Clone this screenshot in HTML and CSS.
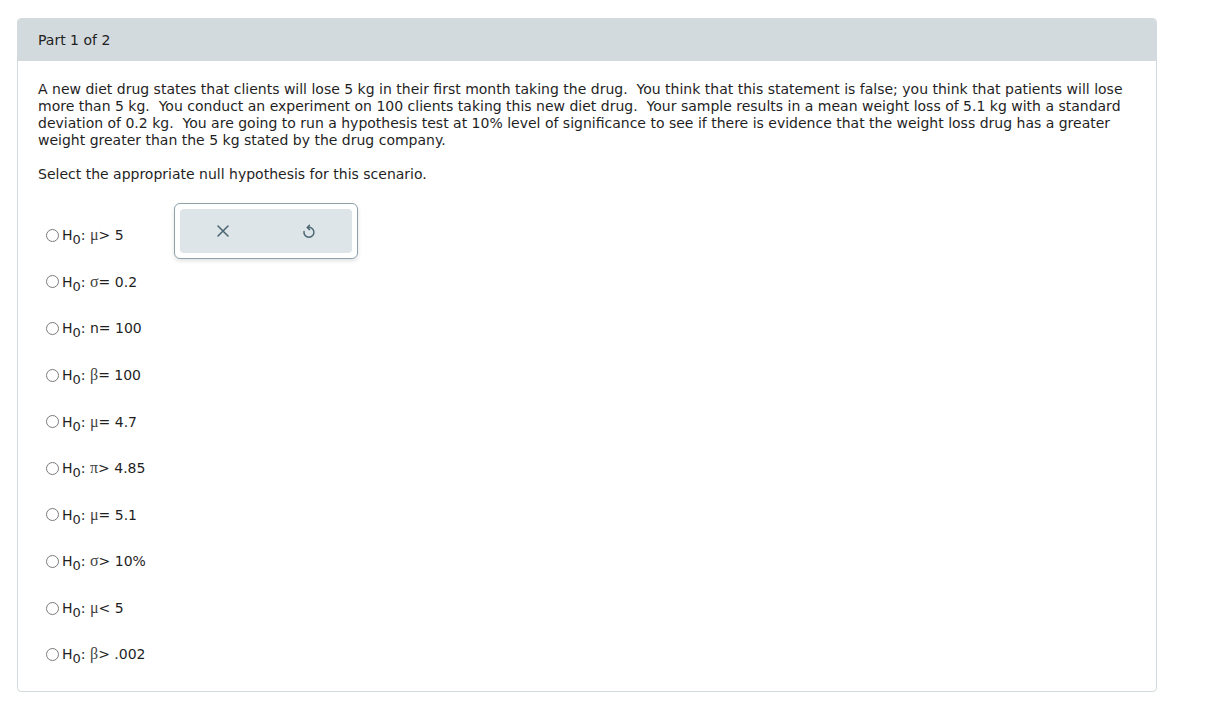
FILE: index.html
```html
<!DOCTYPE html>
<html lang="en">
<head>
  <meta charset="UTF-8">
  <title>Part 1 of 2</title>
  <link rel="stylesheet" href="styles.css">
</head>
<body>
  <div class="card">
    <div class="card-header">Part 1 of 2</div>
    <div class="card-body">
      <p class="question">A new diet drug states that clients will lose 5 kg in their first month taking the drug.&nbsp; You think that this statement is false; you think that patients will lose more than 5 kg.&nbsp; You conduct an experiment on 100 clients taking this new diet drug.&nbsp; Your sample results in a mean weight loss of 5.1 kg with a standard deviation of 0.2 kg.&nbsp; You are going to run a hypothesis test at 10% level of significance to see if there is evidence that the weight loss drug has a greater weight greater than the 5 kg stated by the drug company.</p>
      <p class="prompt">Select the appropriate null hypothesis for this scenario.</p>

      <div class="answer-area">
        <ul class="options">
          <li><span class="radio"></span><span class="label">H<sub>0</sub>:&nbsp;<span class="sym">μ</span>&gt; 5</span></li>
          <li><span class="radio"></span><span class="label">H<sub>0</sub>:&nbsp;<span class="sym">σ</span>= 0.2</span></li>
          <li><span class="radio"></span><span class="label">H<sub>0</sub>:&nbsp;n= 100</span></li>
          <li><span class="radio"></span><span class="label">H<sub>0</sub>:&nbsp;<span class="sym">β</span>= 100</span></li>
          <li><span class="radio"></span><span class="label">H<sub>0</sub>:&nbsp;<span class="sym">μ</span>= 4.7</span></li>
          <li><span class="radio"></span><span class="label">H<sub>0</sub>:&nbsp;<span class="sym">π</span>&gt; 4.85</span></li>
          <li><span class="radio"></span><span class="label">H<sub>0</sub>:&nbsp;<span class="sym">μ</span>= 5.1</span></li>
          <li><span class="radio"></span><span class="label">H<sub>0</sub>:&nbsp;<span class="sym">σ</span>&gt; 10%</span></li>
          <li><span class="radio"></span><span class="label">H<sub>0</sub>:&nbsp;<span class="sym">μ</span>&lt; 5</span></li>
          <li><span class="radio"></span><span class="label">H<sub>0</sub>:&nbsp;<span class="sym">β</span>&gt; .002</span></li>
        </ul>

        <div class="toolbar">
          <div class="toolbar-inner">
            <button class="tool" title="Clear">
              <svg width="14" height="14" viewBox="0 0 14 14"><path d="M2 2 L12 12 M12 2 L2 12" stroke="#4d6874" stroke-width="1.6" fill="none" stroke-linecap="round"/></svg>
            </button>
            <button class="tool" title="Reset">
              <svg width="16" height="18" viewBox="0 0 16 18"><path d="M6.5 5.5 A5 5 0 1 1 3 9.5" stroke="#4d6874" stroke-width="1.5" fill="none" stroke-linecap="round"/><path d="M8.5 3.2 L6.3 5.5 L8.5 7.6" stroke="#4d6874" stroke-width="1.5" fill="none" stroke-linecap="round" stroke-linejoin="round"/></svg>
            </button>
          </div>
        </div>
      </div>
    </div>
  </div>
</body>
</html>
```

FILE: styles.css
```css
body {
  margin: 0;
  padding: 18px 62px 20px 17px;
  font-family: "DejaVu Sans", Verdana, sans-serif;
  font-size: 14px;
  color: #1f1f1f;
  background: #fff;
}
.card {
  border: 1px solid #d3dadd;
  border-radius: 4px;
  overflow: hidden;
}
.card-header {
  background: #d3dadd;
  height: 42px;
  line-height: 42px;
  padding-left: 20px;
  color: #222;
}
.card-body {
  padding: 20px 20px 14px 20px;
}
.question {
  margin: 0 0 17px 0;
  line-height: 17px;
}
.prompt {
  margin: 0;
  line-height: 17px;
}
.answer-area {
  display: flex;
  align-items: flex-start;
  margin-top: 20px;
}
.options {
  list-style: none;
  margin: 0;
  padding: 9px 0 0 0;
  width: 136px;
}
.options li {
  height: 46.6px;
  display: flex;
  align-items: center;
  padding-left: 8px;
  white-space: nowrap;
}
.options li:last-child {
  height: 46px;
}
.radio {
  width: 11px;
  height: 11px;
  border: 1px solid #7a7a7a;
  border-radius: 50%;
  margin-right: 3px;
  flex: none;
}
.label {
  line-height: 18px;
}
.options sub {
  font-size: 13px;
  vertical-align: -4px;
  line-height: 0;
}
.sym {
  font-family: "Liberation Serif", "DejaVu Serif", serif;
  font-size: 16px;
  color: #444;
}
.toolbar {
  border: 1px solid #8fa2ab;
  border-radius: 6px;
  padding: 5px;
  background: #fff;
  box-shadow: 0 2px 4px rgba(0, 0, 0, 0.12);
}
.toolbar-inner {
  width: 172px;
  height: 44px;
  background: #dee5e8;
  border-radius: 4px;
  display: flex;
  justify-content: space-around;
  align-items: center;
}
.tool {
  background: none;
  border: none;
  padding: 0;
  width: 40px;
  height: 30px;
  display: flex;
  align-items: center;
  justify-content: center;
  cursor: pointer;
}
```
